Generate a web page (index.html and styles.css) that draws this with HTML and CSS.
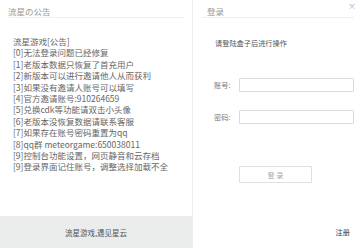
FILE: index.html
```html
<!DOCTYPE html>
<html lang="zh-CN">
<head>
  <meta charset="UTF-8">
  <meta name="viewport" content="width=device-width, initial-scale=1.0">
  <title>流星游戏</title>
  <link rel="stylesheet" href="styles.css">
</head>
<body>

  <div class="notice">
    <div class="panel-title">流星の公告</div>
    <div class="notice-text">
      <div>流星游戏[公告]</div>
      <div>[0]无法登录问题已经修复</div>
      <div>[1]老版本数据只恢复了首充用户</div>
      <div>[2]新版本可以进行邀请他人从而获利</div>
      <div>[3]如果没有邀请人账号可以填写</div>
      <div>[4]官方邀请账号:910264659</div>
      <div>[5]兑换cdk等功能请双击小头像</div>
      <div>[6]老版本没恢复数据请联系客服</div>
      <div>[7]如果存在账号密码重置为qq</div>
      <div>[8]qq群 meteorgame:650038011</div>
      <div>[9]控制台功能设置，网页静音和云存档</div>
      <div>[9]登录界面记住账号，调整选择加载不全</div>
    </div>
    <div class="notice-footer">流星游戏,遇见星云</div>
  </div>

  <div class="login">
    <span class="close-btn">×</span>
    <div class="panel-title">登录</div>
    <div class="login-tip">请登陆盒子后进行操作</div>
    <div class="form-row">
      <label>账号:</label>
      <input type="text" class="field">
    </div>
    <div class="form-row">
      <label>密码:</label>
      <input type="password" class="field">
    </div>
    <button class="login-btn">登 录</button>
    <div class="register">注册</div>
  </div>

</body>
</html>
```

FILE: styles.css
```css
body {
  margin: 0;
  width: 360px;
  height: 248px;
  display: flex;
  font-family: "Noto Sans CJK SC", "Noto Sans", sans-serif;
  background: #fff;
  overflow: hidden;
}

.notice {
  width: 192px;
  border-right: 1px solid #eeeeee;
  display: flex;
  flex-direction: column;
}

.panel-title {
  margin: 0 7px 0 8px;
  padding-top: 5px;
  line-height: 12px;
  font-size: 8.5px;
  color: #999;
  border-bottom: 1px solid #f0f0f0;
}

.notice-text {
  flex: 1;
  margin-top: 18px;
  padding-left: 13px;
  font-size: 8.5px;
  line-height: 11.4px;
  color: #666;
  white-space: nowrap;
}

.notice-footer {
  height: 32px;
  line-height: 34px;
  background: #ebedec;
  text-align: center;
  font-size: 7.5px;
  color: #555;
}

.login {
  flex: 1;
  position: relative;
}

.login .panel-title {
  margin: 0 6px 0 9px;
  padding-left: 5px;
}

.close-btn {
  position: absolute;
  top: 0;
  right: 4px;
  font-size: 8px;
  color: #aaa;
}

.login-tip {
  margin: 20px 0 0 22px;
  font-size: 7.2px;
  color: #555;
}

.form-row {
  display: flex;
  align-items: center;
  margin-left: 21px;
  margin-top: 30px;
}

.form-row + .form-row {
  margin-top: 18px;
}

.form-row label {
  width: 25px;
  font-size: 7.2px;
  color: #777;
}

.field {
  box-sizing: border-box;
  width: 115px;
  height: 14px;
  margin: 0;
  border: 1px solid #dcdcdc;
  border-radius: 1px;
  background: #fff;
  outline: none;
}

.login-btn {
  display: block;
  box-sizing: border-box;
  width: 73px;
  height: 17px;
  margin: 42px 0 0 46px;
  padding: 0;
  border: 1px solid #e0e0e0;
  border-radius: 1px;
  background: #fff;
  font-family: inherit;
  font-size: 7.2px;
  color: #aaa;
}

.register {
  position: absolute;
  right: 10px;
  bottom: 11px;
  font-size: 7.2px;
  color: #334;
}
```
